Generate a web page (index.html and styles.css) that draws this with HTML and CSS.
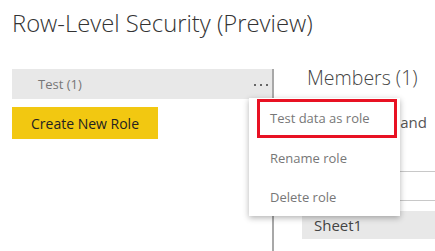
FILE: index.html
```html
<!DOCTYPE html>
<html lang="en">
  <head>
    <meta charset="UTF-8" />
    <meta name="viewport" content="width=device-width, initial-scale=1.0" />
    <title>Row-Level Security (Preview)</title>
    <link rel="stylesheet" href="styles.css">
  </head>
  <body>
    <h1 class="page-title">Row-Level Security (Preview)</h1>

    <div class="rls">
      <div class="roles">
        <div class="role-item">
          <span class="role-item__name">Test (1)</span>
          <span class="role-item__more"><i></i><i></i><i></i></span>
        </div>
        <button class="create-role">Create New Role</button>
      </div>

      <div class="members">
        <h2 class="members__title">Members (1)</h2>
        <p class="members__hint">Enter people and groups</p>
        <div class="members__input"></div>
        <div class="members__row">Sheet1</div>
      </div>
    </div>

    <ul class="context-menu">
      <li class="context-menu__item context-menu__item--marked">Test data as role</li>
      <li class="context-menu__item">Rename role</li>
      <li class="context-menu__item context-menu__item--last">Delete role</li>
    </ul>
  </body>
</html>
```

FILE: styles.css
```css
body {
  margin: 0;
  height: 100vh;
  display: flex;
  flex-direction: column;
  font-family: "Open Sans", "Noto Sans", Arial, sans-serif;
  background: #fff;
  color: #333;
  overflow: hidden;
  position: relative;
}

.page-title {
  margin: 9px 0 32px 12px;
  font-size: 23.8px;
  line-height: 28px;
  font-weight: 300;
  color: #333;
}

.rls {
  flex: 1;
  display: flex;
}

.roles {
  flex-shrink: 0;
  margin-left: 12px;
  width: 260px;
  border-right: 2px solid #a8a8a8;
}

.role-item {
  height: 30px;
  display: flex;
  align-items: center;
  justify-content: space-between;
  padding-left: 26px;
  padding-right: 4px;
  background: #e8e8e8;
  font-size: 13px;
  color: #777;
}

.role-item__more {
  display: flex;
  gap: 4px;
  margin-top: 2px;
}

.role-item__more i {
  width: 2px;
  height: 2px;
  background: #666;
}

.create-role {
  display: block;
  margin-top: 8px;
  width: 146px;
  height: 32px;
  padding: 0;
  border: none;
  background: #f2c811;
  font-family: inherit;
  font-size: 14px;
  color: #222;
}

.members {
  flex: 1;
  min-width: 0;
  padding-left: 28px;
}

.members__title {
  margin: 0 0 0 5px;
  font-size: 19.5px;
  line-height: 18px;
  font-weight: 300;
  color: #444;
}

.members__hint {
  margin: 25px 0 0 5px;
  font-size: 15px;
  line-height: 20px;
  color: #555;
}

.members__input {
  margin-top: 19px;
  height: 28px;
  border-top: 1px solid #c8c8c8;
  border-bottom: 1px solid #c8c8c8;
}

.members__row {
  margin-top: 10px;
  height: 28px;
  line-height: 28px;
  padding-left: 12px;
  background: #e8e8e8;
  font-size: 15px;
  color: #444;
}

.context-menu {
  position: absolute;
  left: 249px;
  top: 98px;
  width: 151px;
  height: 117px;
  margin: 0;
  padding: 1px 0 0;
  list-style: none;
  background: #fff;
  box-shadow: 0 2px 6px rgba(0, 0, 0, 0.3);
  font-size: 13px;
  color: #777;
}

.context-menu__item {
  height: 40px;
  line-height: 40px;
  padding-left: 21px;
}

.context-menu__item--marked {
  height: 33px;
  line-height: 33px;
  margin: 0 3px 0 8px;
  padding-left: 10px;
  border: 3px solid #e81123;
}

.context-menu__item--last {
  height: 38px;
  line-height: 38px;
}
```
